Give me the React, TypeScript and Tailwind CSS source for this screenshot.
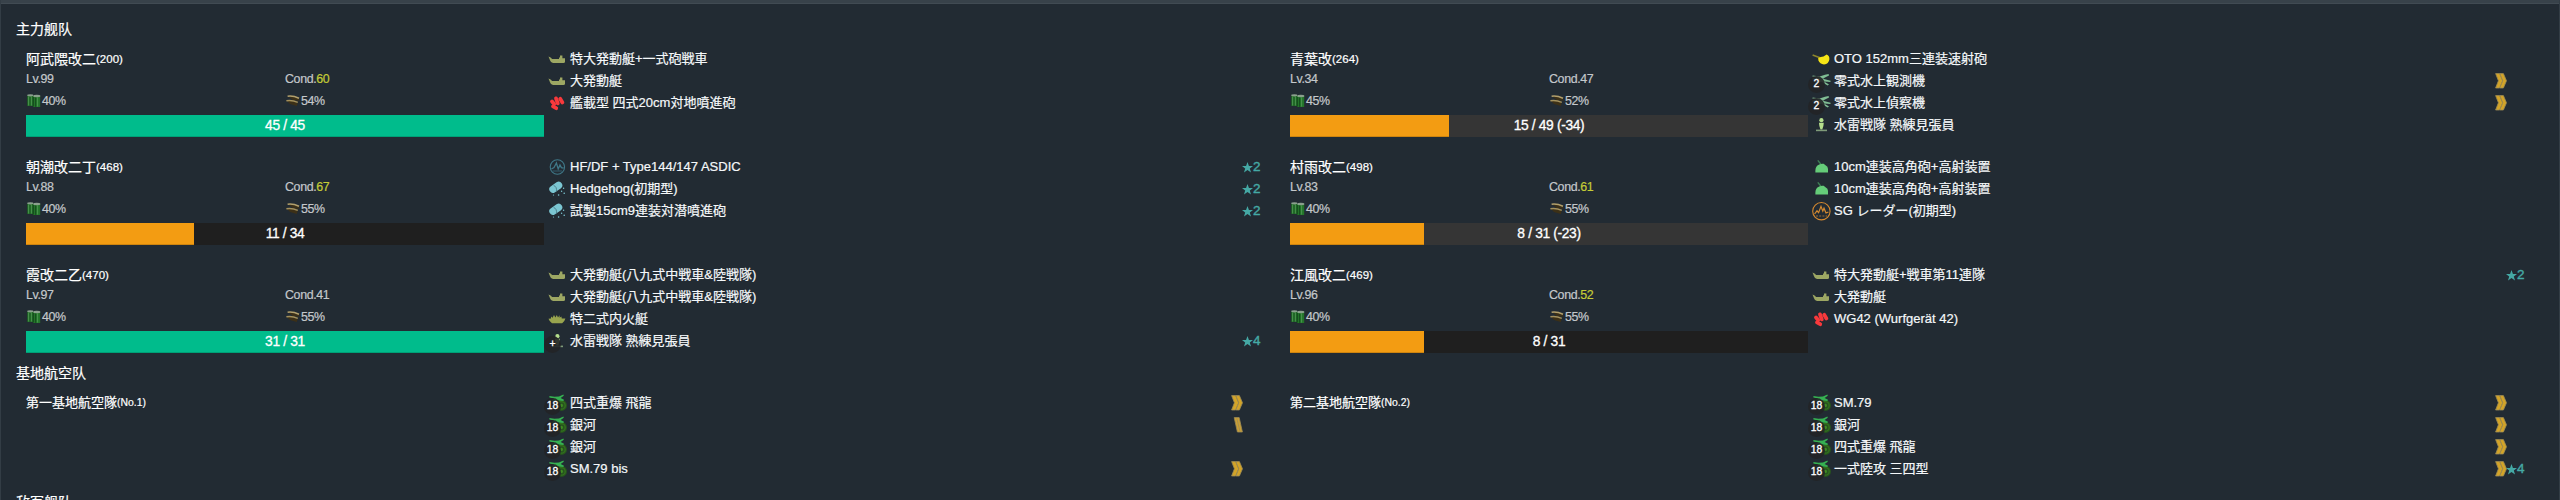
import type { ReactNode } from "react";

type IconName = "boat" | "rocket" | "sonar" | "hedgehog" | "tankboat" | "lookout" | "gun" | "seaplane" | "aagun" | "radar" | "bomber";
type Rank = "high" | "low";

interface Item {
  icon: IconName;
  name: string;
  badge?: string;
  star?: number;
  rank?: Rank;
}

interface Ship {
  name: string;
  id: number;
  lv: number;
  cond: number;
  fuel: number;
  ammo: number;
  hp: number;
  max: number;
  lost?: number;
  items: Item[];
}

const fleet: Ship[] = [
  {
    name: "阿武隈改二", id: 200, lv: 99, cond: 60, fuel: 40, ammo: 54, hp: 45, max: 45,
    items: [
      { icon: "boat", name: "特大発動艇+一式砲戦車" },
      { icon: "boat", name: "大発動艇" },
      { icon: "rocket", name: "艦載型 四式20cm対地噴進砲" },
    ],
  },
  {
    name: "青葉改", id: 264, lv: 34, cond: 47, fuel: 45, ammo: 52, hp: 15, max: 49, lost: 34,
    items: [
      { icon: "gun", name: "OTO 152mm三連装速射砲" },
      { icon: "seaplane", name: "零式水上観測機", badge: "2", rank: "high" },
      { icon: "seaplane", name: "零式水上偵察機", badge: "2", rank: "high" },
      { icon: "lookout", name: "水雷戦隊 熟練見張員" },
    ],
  },
  {
    name: "朝潮改二丁", id: 468, lv: 88, cond: 67, fuel: 40, ammo: 55, hp: 11, max: 34,
    items: [
      { icon: "sonar", name: "HF/DF + Type144/147 ASDIC", star: 2 },
      { icon: "hedgehog", name: "Hedgehog(初期型)", star: 2 },
      { icon: "hedgehog", name: "試製15cm9連装対潜噴進砲", star: 2 },
    ],
  },
  {
    name: "村雨改二", id: 498, lv: 83, cond: 61, fuel: 40, ammo: 55, hp: 8, max: 31, lost: 23,
    items: [
      { icon: "aagun", name: "10cm連装高角砲+高射装置" },
      { icon: "aagun", name: "10cm連装高角砲+高射装置" },
      { icon: "radar", name: "SG レーダー(初期型)" },
    ],
  },
  {
    name: "霞改二乙", id: 470, lv: 97, cond: 41, fuel: 40, ammo: 55, hp: 31, max: 31,
    items: [
      { icon: "boat", name: "大発動艇(八九式中戦車&陸戦隊)" },
      { icon: "boat", name: "大発動艇(八九式中戦車&陸戦隊)" },
      { icon: "tankboat", name: "特二式内火艇" },
      { icon: "lookout", name: "水雷戦隊 熟練見張員", badge: "+", star: 4 },
    ],
  },
  {
    name: "江風改二", id: 469, lv: 96, cond: 52, fuel: 40, ammo: 55, hp: 8, max: 31,
    items: [
      { icon: "boat", name: "特大発動艇+戦車第11連隊", star: 2 },
      { icon: "boat", name: "大発動艇" },
      { icon: "rocket", name: "WG42 (Wurfgerät 42)" },
    ],
  },
];

const airbases: { name: string; no: number; items: Item[] }[] = [
  {
    name: "第一基地航空隊", no: 1,
    items: [
      { icon: "bomber", name: "四式重爆 飛龍", badge: "18", rank: "high" },
      { icon: "bomber", name: "銀河", badge: "18", rank: "low" },
      { icon: "bomber", name: "銀河", badge: "18" },
      { icon: "bomber", name: "SM.79 bis", badge: "18", rank: "high" },
    ],
  },
  {
    name: "第二基地航空隊", no: 2,
    items: [
      { icon: "bomber", name: "SM.79", badge: "18", rank: "high" },
      { icon: "bomber", name: "銀河", badge: "18", rank: "high" },
      { icon: "bomber", name: "四式重爆 飛龍", badge: "18", rank: "high" },
      { icon: "bomber", name: "一式陸攻 三四型", badge: "18", rank: "high", star: 4 },
    ],
  },
];

const glyphs: Record<IconName, ReactNode> = {
  boat: <path d="M1.5 7.6 L4 8.8 L5 10 H12 V8.6 H13 V6.6 H15.4 V9.2 H18 V13 Q17.8 14 16.5 14 H6 Q3.5 13.6 3 11.3 Z" fill="#9da763" />,
  tankboat: <path d="M1.5 9.8 L4 9.4 V7.4 L5.6 8.8 L7 6 L8.4 8.4 L9.8 6 L11 8.4 L12.6 6.2 V8.8 L14.4 7.6 L14.8 9.4 L18.4 9.6 Q17.5 13 15.2 14.2 H5 Q2.6 13 1.5 9.8 Z" fill="#98a44e" />,
  rocket: (
    <g stroke="#f8393c" strokeWidth="3.8" strokeLinecap="round">
      <path d="M5 8.4 L7.2 11" />
      <path d="M6 13.4 L9.2 15.2" />
      <path d="M9 5.4 L10.8 10.4" />
      <path d="M13.2 5.8 L15.4 9.4" />
    </g>
  ),
  sonar: (
    <g fill="none" stroke="#3f7888" strokeWidth="1.1">
      <circle cx="10.4" cy="10" r="7.2" />
      <path d="M4.4 12 L7 10.6 L9.4 6 L11.2 12 L13 8 L14.4 10.6 L16.6 11" strokeWidth="1.3" />
      <path d="M5.5 14 H15" opacity=".6" />
    </g>
  ),
  hedgehog: (
    <g fill="#7bc6d2">
      <path d="M6 10.2 L11.6 6.4" stroke="#7bc6d2" strokeWidth="7.4" strokeLinecap="round" />
      <path d="M6.6 6.4 Q10.2 7.8 9.4 12.6" fill="none" stroke="#41727e" strokeWidth=".8" />
      <circle cx="16.6" cy="9.2" r=".7" />
      <circle cx="14.6" cy="12.2" r=".7" />
      <circle cx="17.2" cy="14.2" r=".8" />
      <circle cx="11.6" cy="16" r=".8" />
      <circle cx="6.5" cy="16" r=".6" />
    </g>
  ),
  lookout: (
    <g fill="#b5df8c">
      <circle cx="10.4" cy="5.2" r="2.1" />
      <path d="M8 7.8 H12.8 L12.4 11 L11.3 14.6 H9.5 L8.4 11 Z" />
      <path d="M5 14.6 H16 V16.2 H5 Z" fill="#7f9b79" />
    </g>
  ),
  gun: (
    <g fill="#f7e516">
      <path d="M1.6 6 L9 8.8" stroke="#8d862b" strokeWidth="1.5" />
      <path d="M7.2 9 Q9.6 7.4 12.5 7.4 L15.6 5.6 Q18.6 6.8 18.4 10.2 Q17.8 15 13 15.4 Q8.8 15 7.4 11.4 Z" />
    </g>
  ),
  seaplane: (
    <g fill="#80bd94">
      <path d="M1.6 4.6 L8.6 5.4 L14 3.8 L17.6 3 L18 4.4 L14 6.4 L12 7.8 L19.6 9.8 L19.4 11 L13 10.6 L18 13.6 L16.6 14.4 L10.6 10.8 L5 12 L4.6 10.4 L8.6 8.2 L1.6 9 L1.4 7.6 L8.4 6.8 L1.6 5.8 Z" />
    </g>
  ),
  aagun: (
    <g>
      <path d="M6.8 3.4 L10 7.4" stroke="#3f7f55" strokeWidth="1.5" />
      <path d="M4.4 15.4 Q4 10.8 6.4 8.6 Q9 6.4 12.6 6.8 L16.4 9.8 Q17.6 12.4 17 15.4 Z" fill="#65cc79" />
    </g>
  ),
  radar: (
    <g fill="none" stroke="#d5892f" strokeWidth="1.1">
      <circle cx="10.4" cy="10.2" r="8.7" />
      <path d="M3.6 13 L6 9.8 L7.6 11.6 L10 5.4 L11.8 10.2 L13 7.2 L15 12 L17.4 11" strokeWidth="1.2" />
      <path d="M5 15 H16" strokeDasharray="2 1.2" opacity=".7" />
    </g>
  ),
  bomber: (
    <g>
      <circle cx="14.4" cy="12.4" r="5.6" fill="#27531f" />
      <circle cx="14.4" cy="12.4" r="3.8" fill="none" stroke="#33731d" strokeWidth="1.3" />
      <circle cx="14.4" cy="12.4" r="1.6" fill="#3f8d22" />
      <path d="M2.4 3 L7.4 3.8 L12 3.4 L16.4 1.6 L16.8 2.8 L13.6 5 L17 6.8 L16.4 8 L11.6 7.4 L5 8.6 L4.2 7.6 L7 5.6 L2.4 4.4 Z" fill="#36b152" />
    </g>
  ),
};

function EquipIcon({ icon, badge }: { icon: IconName; badge?: string }) {
  return (
    <span className="relative mr-[3px] block size-5 shrink-0">
      <svg viewBox="0 0 20 20" className="block size-5 overflow-visible">{glyphs[icon]}</svg>
      {badge && (
        <span className="absolute -left-[3px] top-[5px] flex size-[17px] items-center justify-center rounded-full bg-[#222426]/90 text-[10.4px] leading-none text-white [-webkit-text-stroke:0.3px]">
          {badge}
        </span>
      )}
    </span>
  );
}

function RankMark({ rank }: { rank: Rank }) {
  return (
    <svg viewBox="0 0 12 16" className="block h-4 w-3 shrink-0">
      {rank === "high" ? (
        <g stroke="#9c8a56" strokeWidth=".8" fill="#d3a428">
          <path d="M.6 .6 H4.6 L7.6 7.8 L4.6 15 H.6 L3.4 7.8 Z" />
          <path d="M4.8 .6 H8.4 L11.5 7.8 L8.4 15 H4.8 L7.8 7.8 Z" />
        </g>
      ) : (
        <g stroke="#9c8a56" strokeWidth=".8" fill="#c99f35">
          <path d="M3.2 .6 H8.2 L11.4 15 H6.4 Z" />
          <path d="M5.8 1.4 L9 14.4" />
        </g>
      )}
    </svg>
  );
}

function EquipList({ items }: { items: Item[] }) {
  return (
    <ul className="w-[720px] pl-[3px] pt-px">
      {items.map((item, i) => (
        <li key={i} className="flex h-[22px] items-center text-[13px] leading-[22px] text-[#f5f8fa] [-webkit-text-stroke:0.2px]">
          <EquipIcon icon={item.icon} badge={item.badge} />
          <span className="grow whitespace-nowrap">{item.name}</span>
          {item.rank && <RankMark rank={item.rank} />}
          <span className="mb-px flex w-[21px] shrink-0 items-center text-[#45a9a5]">
            {item.star && (
              <>
                <svg viewBox="0 0 10 10" className="-ml-px mt-px block size-[11px] shrink-0" fill="currentColor">
                  <path d="M5 .1 L6.3 3.6 H10 L7.1 5.8 L8.2 9.5 L5 7.3 L1.8 9.5 L2.9 5.8 L0 3.6 H3.7 Z" />
                </svg>
                <span className="text-[13.5px] [-webkit-text-stroke:0.4px]">{item.star}</span>
              </>
            )}
          </span>
        </li>
      ))}
    </ul>
  );
}

function FuelIcon() {
  return (
    <svg viewBox="0 0 16 16" className="block size-4 shrink-0">
      <path d="M1.2 2.6 H7 V13 H1.2 Z" fill="#1d6424" />
      <path d="M7 3 H14.2 V14 H7 Z" fill="#23752a" />
      <path d="M2.6 3.4 V12.6 M5.4 3.4 V12.6 M11.6 4.4 V13.6" stroke="#4c9450" strokeWidth="1" />
      <path d="M7.4 4 V13.6 M9.6 4.4 V13.8" stroke="#164a1e" strokeWidth="1" />
      <ellipse cx="4.4" cy="2.3" rx="3.2" ry="1.1" fill="#8aa08d" />
      <ellipse cx="10.8" cy="3" rx="3.6" ry="1.2" fill="#8aa08d" />
    </svg>
  );
}

function AmmoIcon() {
  return (
    <svg viewBox="0 0 16 16" className="block size-4 shrink-0">
      <path d="M3 3 L13.6 5 L14.6 7.8 L8 7.2 Z M1.6 7.6 L6 7.8 L12.8 9.8 L11.8 13 L5 11 Z" fill="#3c3017" />
      <path d="M2.6 3.2 Q8 2.4 14 5.2" stroke="#b3a06c" strokeWidth="1.5" fill="none" />
      <path d="M1.4 7.8 Q7 6.8 12.8 9.4" stroke="#a3905c" strokeWidth="1.5" fill="none" />
    </svg>
  );
}

function ShipCard({ ship }: { ship: Ship }) {
  const full = ship.hp === ship.max;
  return (
    <div className="flex h-[108px] w-[1264px]">
      <div className="w-[518px]">
        <div className="flex h-[22px] items-center whitespace-nowrap pt-px text-[14px] leading-[22px] text-white [-webkit-text-stroke:0.2px]">
          <span>{ship.name}</span>
          <span className="mt-px text-[11.5px]">({ship.id})</span>
        </div>
        <div className="grid h-[46px] grid-cols-2 grid-rows-[20px_24px] items-center text-[12.4px] tracking-[-0.35px] text-[#c4c8cb] [-webkit-text-stroke:0.2px]">
          <div>Lv.{ship.lv}</div>
          <div>
            Cond.<span className={ship.cond > 49 ? "text-[#c5cc36]" : ""}>{ship.cond}</span>
          </div>
          <div className="flex items-center"><FuelIcon />{ship.fuel}%</div>
          <div className="flex items-center"><AmmoIcon />{ship.ammo}%</div>
        </div>
        <div className={`grid h-[22px] ${ship.lost ? "bg-[#353535]" : "bg-[#1f1f1f]"}`}>
          <div
            className={`col-start-1 row-start-1 shadow-[inset_0_-1px_0_rgba(0,0,0,0.15)] ${full ? "bg-[#00bc8c]" : "bg-[#f39c12]"}`}
            style={{ width: `${(ship.hp / ship.max) * 100}%` }}
          />
          <div className="z-10 col-start-1 row-start-1 text-center text-[13.8px] leading-[21px] tracking-[-0.35px] text-white [-webkit-text-stroke:0.3px]">
            {ship.hp} / {ship.max}{ship.lost ? ` (-${ship.lost})` : ""}
          </div>
        </div>
      </div>
      <EquipList items={ship.items} />
    </div>
  );
}

export default function App() {
  return (
    <div className="h-[500px] w-[2560px] overflow-hidden border-x border-[#333d45] bg-[#222b33] font-['Liberation_Sans','Noto_Sans_CJK_JP',sans-serif]">
      <div className="h-[4px] border-b border-[#414b53] bg-[#38424a]" />
      <h2 className="h-[43px] pl-[15px] pt-[14px] font-['Liberation_Sans','Noto_Sans_CJK_SC',sans-serif] text-[14px] leading-[22px] text-white [-webkit-text-stroke:0.2px]">主力舰队</h2>
      <section className="flex flex-wrap pl-[25px]">
        {fleet.map((ship) => <ShipCard key={ship.id} ship={ship} />)}
      </section>
      <h2 className="-mt-[10px] h-[30px] pl-[15px] pt-px font-['Liberation_Sans','Noto_Sans_CJK_SC',sans-serif] text-[14px] leading-[22px] text-white [-webkit-text-stroke:0.2px]">基地航空队</h2>
      <section className="flex h-[100px] pl-[25px]">
        {airbases.map((base) => (
          <div key={base.no} className="flex w-[1264px] shrink-0">
            <div className="flex h-[22px] w-[518px] items-center pt-px text-[13px] text-white [-webkit-text-stroke:0.2px]">
              <span>{base.name}</span>
              <span className="mt-px text-[10.4px]">(No.{base.no})</span>
            </div>
            <EquipList items={base.items} />
          </div>
        ))}
      </section>
      <h2 className="h-[22px] pl-[15px] font-['Liberation_Sans','Noto_Sans_CJK_SC',sans-serif] text-[14px] leading-[22px] text-white [-webkit-text-stroke:0.2px]">敌军舰队</h2>
    </div>
  );
}
